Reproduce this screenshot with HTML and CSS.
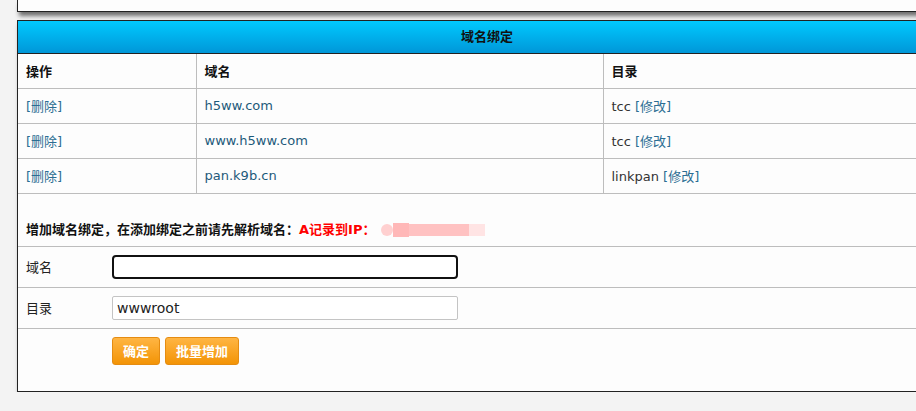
FILE: index.html
```html
<!DOCTYPE html>
<html lang="zh">
<head>
<meta charset="utf-8">
<title>域名绑定</title>
<link rel="stylesheet" href="styles.css">
</head>
<body>
<div class="page">
  <div class="panel panel-top"></div>
  <div class="panel panel-main">
    <div class="panel-head">域名绑定</div>
    <table class="grid">
      <colgroup>
        <col class="c1"><col class="c2"><col class="c3">
      </colgroup>
      <thead>
        <tr><th>操作</th><th>域名</th><th>目录</th></tr>
      </thead>
      <tbody>
        <tr><td><a class="lnk">[删除]</a></td><td class="dom">h5ww.com</td><td>tcc <a class="lnk">[修改]</a></td></tr>
        <tr><td><a class="lnk">[删除]</a></td><td class="dom">www.h5ww.com</td><td>tcc <a class="lnk">[修改]</a></td></tr>
        <tr><td><a class="lnk">[删除]</a></td><td class="dom">pan.k9b.cn</td><td>linkpan <a class="lnk">[修改]</a></td></tr>
      </tbody>
    </table>
    <div class="notice">增加域名绑定，在添加绑定之前请先解析域名：<span class="red">A记录到IP：</span><span class="blur"><i class="b1"></i><i class="b2"></i><i class="b3"></i><i class="b4"></i></span></div>
    <div class="form-row">
      <span class="label">域名</span>
      <input class="inp focus" type="text" value="">
    </div>
    <div class="form-row">
      <span class="label">目录</span>
      <input class="inp" type="text" value="wwwroot">
    </div>
    <div class="form-row buttons">
      <span class="label"></span>
      <button class="btn">确定</button>
      <button class="btn">批量增加</button>
    </div>
  </div>
</div>
</body>
</html>
```

FILE: styles.css
```css
html, body {
  margin: 0;
  padding: 0;
  background: #f3f3f3;
  overflow: hidden;
  font-family: "DejaVu Sans", Verdana, "Noto Sans CJK SC", sans-serif;
  font-size: 13px;
  color: #222;
}
.page {
  padding-left: 17px;
  width: 940px;
}
.panel {
  background: #fdfdfd;
  border: 1px solid #222;
  box-shadow: 2px 4px 4px rgba(0,0,0,0.55);
  width: 940px;
  box-sizing: border-box;
}
.panel-top {
  border-top: none;
  height: 12px;
}
.panel-main {
  margin-top: 8px;
}
.panel-head {
  height: 32px;
  line-height: 32px;
  text-align: center;
  font-weight: bold;
  color: #111;
  background: linear-gradient(#00c9ff, #0097d8);
  border-bottom: 1px solid #222;
}
.grid {
  width: 100%;
  border-collapse: collapse;
  table-layout: fixed;
}
.c1 { width: 178px; }
.c2 { width: 407px; }
.grid th, .grid td {
  padding: 0 8px;
  text-align: left;
  border-bottom: 1px solid #bdbdbd;
  border-left: 1px solid #bdbdbd;
  box-sizing: border-box;
}
.grid th { height: 34px; }
.grid td { height: 35px; }
.grid th:first-child, .grid td:first-child { border-left: none; }
.grid th { font-weight: bold; color: #111; }
.grid td { color: #333; }
.grid td.dom { color: #1d5a7a; }
.lnk { color: #2b6d93; }
.notice {
  padding: 25px 8px 10px;
  height: 53px;
  box-sizing: border-box;
  font-weight: bold;
  color: #111;
  border-bottom: 1px solid #bdbdbd;
  white-space: nowrap;
}
.red { color: #f00; }
.blur {
  display: inline-flex;
  vertical-align: middle;
  align-items: center;
  margin-left: 6px;
  height: 14px;
}
.blur i { display: block; height: 12px; }
.b1 { width: 12px; background: #ffd0d0; border-radius: 6px; }
.b2 { width: 16px; background: #ffb8b8; height: 14px !important; }
.b3 { width: 60px; background: #ffc2c2; }
.b4 { width: 16px; background: #ffe4e4; }
.form-row {
  display: flex;
  align-items: center;
  height: 40px;
  padding-left: 8px;
  border-bottom: 1px solid #bdbdbd;
}
.label {
  width: 86px;
  color: #222;
}
.inp {
  width: 346px;
  height: 24px;
  box-sizing: border-box;
  border: 1px solid #c4c4c4;
  border-radius: 2px;
  padding: 0 4px;
  font-family: "DejaVu Sans", Verdana, sans-serif;
  font-size: 14px;
  color: #222;
  background: #fff;
}
.inp.focus {
  border: 2px solid #111;
  border-radius: 4px;
}
.buttons {
  border-bottom: none;
  height: 62px;
  align-items: flex-start;
  padding-top: 8px;
  box-sizing: border-box;
}
.btn {
  height: 28px;
  padding: 0 10px;
  margin-right: 5px;
  border: 1px solid #e58c12;
  border-radius: 3px;
  background: linear-gradient(#ffb543, #f39406);
  color: #fff;
  font-family: "DejaVu Sans", "Noto Sans CJK SC", sans-serif;
  font-size: 13px;
  font-weight: bold;
}
```
